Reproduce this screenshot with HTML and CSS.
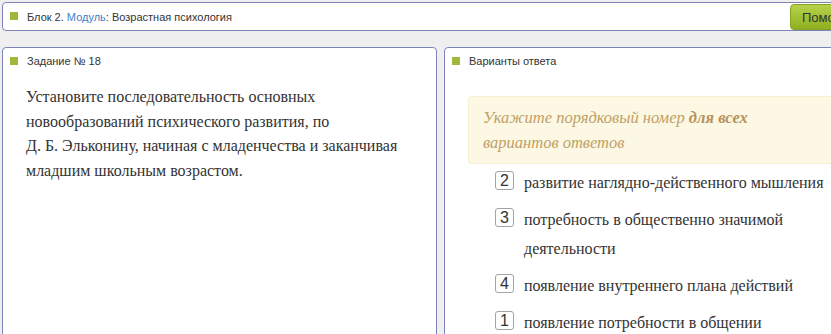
FILE: index.html
```html
<!DOCTYPE html>
<html lang="ru">
<head>
  <meta charset="UTF-8">
  <title>Задание № 18</title>
  <link rel="stylesheet" href="styles.css">
</head>
<body>
  <div class="page">
    <div class="topbar">
      <span class="marker"></span>
      <span class="topbar-title">Блок 2. <a href="#" class="module-link">Модуль</a>: Возрастная психология</span>
      <button class="help-button">Помощь</button>
    </div>

    <div class="columns">
      <div class="panel task-panel">
        <div class="panel-header"><span class="marker"></span>Задание № 18</div>
        <p class="task-text">Установите последовательность основных новообразований психического развития, по Д.&nbsp;Б.&nbsp;Эльконину, начиная с младенчества и заканчивая младшим школьным возрастом.</p>
      </div>

      <div class="panel answers-panel">
        <div class="panel-header"><span class="marker"></span>Варианты ответа</div>
        <div class="hint">Укажите порядковый номер <b>для всех</b><br>вариантов ответов</div>
        <ul class="answers">
          <li class="answer"><span class="answer-num">2</span><span class="answer-text">развитие наглядно-действенного мышления</span></li>
          <li class="answer"><span class="answer-num">3</span><span class="answer-text">потребность в общественно значимой деятельности</span></li>
          <li class="answer"><span class="answer-num">4</span><span class="answer-text">появление внутреннего плана действий</span></li>
          <li class="answer"><span class="answer-num">1</span><span class="answer-text">появление потребности в общении</span></li>
        </ul>
      </div>
    </div>
  </div>
</body>
</html>
```

FILE: styles.css
```css
body {
  margin: 0;
  background: #efefef;
  font-family: "Liberation Sans", Arial, sans-serif;
  color: #333;
  overflow: hidden;
}
.page {
  width: 880px;
  padding: 2px 0 0 2px;
}
.marker {
  display: inline-block;
  width: 8px;
  height: 8px;
  background: #9fb83a;
  margin-right: 9px;
  flex-shrink: 0;
}
.topbar {
  display: flex;
  align-items: center;
  height: 27px;
  padding-left: 7px;
  background: #fff;
  border: 1px solid #7c83b7;
  border-radius: 4px;
  font-size: 11px;
}
.topbar .marker {
  margin-top: -1px;
}
.module-link {
  color: #3d7fc6;
  text-decoration: none;
}
.help-button {
  margin-left: auto;
  margin-right: 5px;
  align-self: flex-end;
  width: 86px;
  height: 26px;
  padding: 0 0 0 11px;
  text-align: left;
  font-family: "Liberation Sans", Arial, sans-serif;
  font-size: 13px;
  color: #333;
  background: linear-gradient(#b6d24a, #8fb020);
  border: 1px solid #86a523;
  border-radius: 4px;
}
.columns {
  display: flex;
  gap: 7px;
  margin-top: 16px;
}
.panel {
  box-sizing: border-box;
  height: 320px;
  background: #fff;
  border: 1px solid #7c83b7;
  border-radius: 4px;
}
.task-panel {
  width: 435px;
}
.answers-panel {
  flex: 1;
}
.panel-header {
  display: flex;
  align-items: center;
  height: 26px;
  padding: 0 7px;
  font-size: 11px;
}
.task-text {
  margin: 0;
  padding: 11px 22px 0 23px;
  font-family: "Liberation Serif", "Times New Roman", serif;
  font-size: 16px;
  line-height: 24.6px;
  color: #333;
}
.hint {
  margin: 22px 0 0 23px;
  padding: 8px 14px;
  background: #fcf8e3;
  border: 1px solid #f8efd2;
  border-right: none;
  border-radius: 4px 0 0 4px;
  font-family: "Liberation Serif", "Times New Roman", serif;
  font-style: italic;
  font-size: 16.5px;
  line-height: 25px;
  color: #c09f67;
}
.hint b {
  color: #b8925a;
}
.answers {
  list-style: none;
  margin: 4px 0 0;
  padding: 0 36px 0 50px;
}
.answer {
  display: flex;
  align-items: flex-start;
  margin-bottom: 8px;
  font-family: "Liberation Serif", "Times New Roman", serif;
  font-size: 16px;
  line-height: 29px;
  color: #333;
}
.answer-num {
  flex-shrink: 0;
  width: 17px;
  height: 17px;
  margin-top: 3px;
  margin-right: 10px;
  border: 1px solid #a3a3a3;
  border-radius: 3px;
  font-family: "Liberation Sans", Arial, sans-serif;
  font-size: 16px;
  line-height: 17px;
  text-align: center;
}
```
